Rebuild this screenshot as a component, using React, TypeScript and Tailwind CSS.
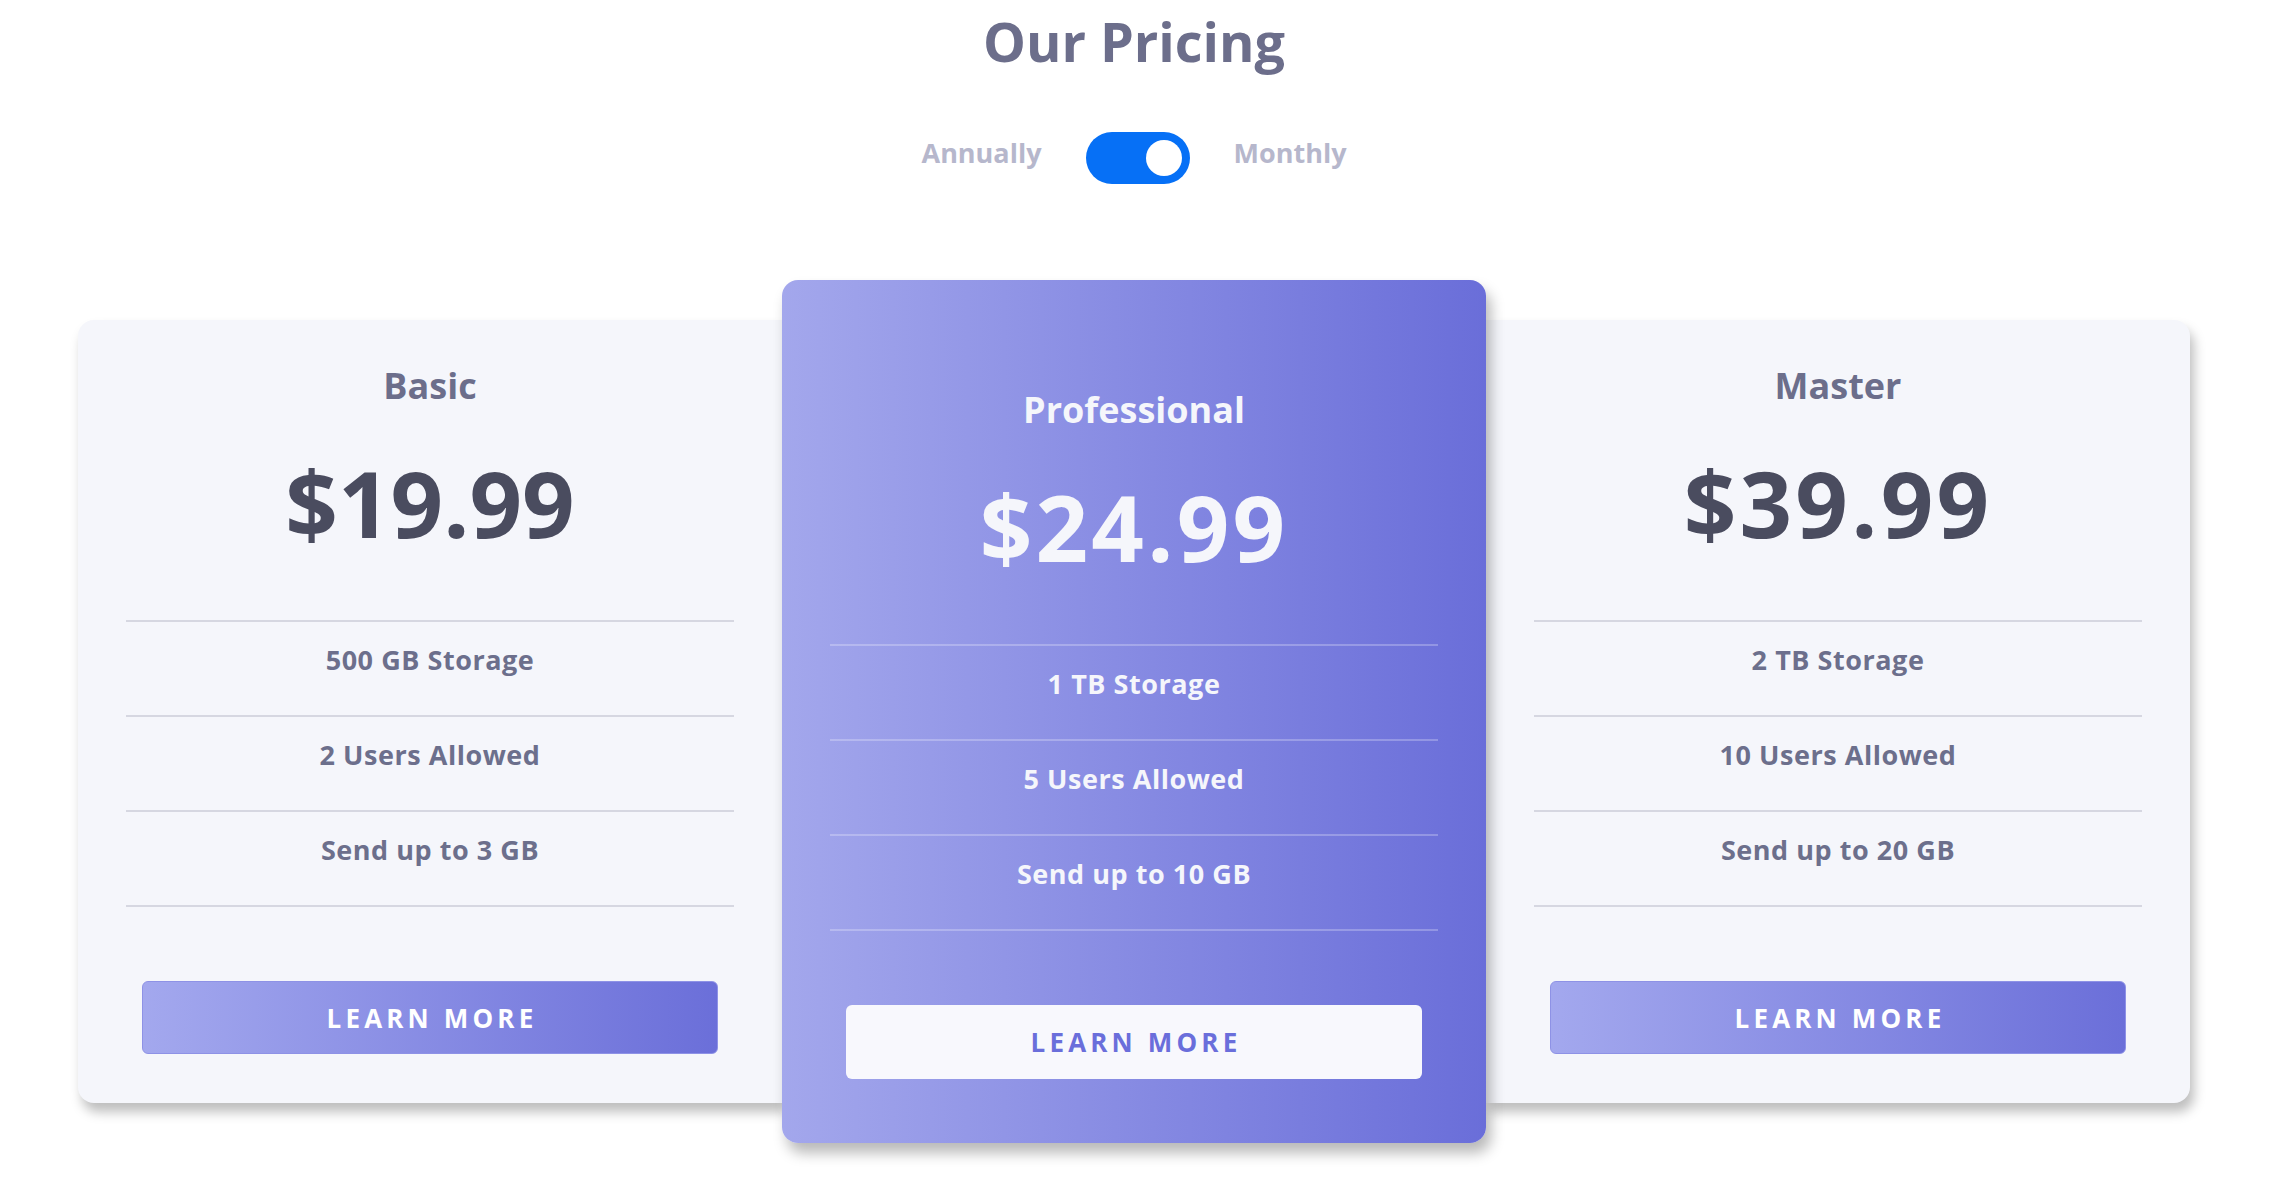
import React from "react";

type Plan = {
  name: string;
  price: string;
  wide: boolean;
  features: string[];
};

const basic: Plan = {
  name: "Basic",
  price: "$19.99",
  wide: false,
  features: ["500 GB Storage", "2 Users Allowed", "Send up to 3 GB"],
};
const pro: Plan = {
  name: "Professional",
  price: "$24.99",
  wide: true,
  features: ["1 TB Storage", "5 Users Allowed", "Send up to 10 GB"],
};
const master: Plan = {
  name: "Master",
  price: "$39.99",
  wide: true,
  features: ["2 TB Storage", "10 Users Allowed", "Send up to 20 GB"],
};

function SideCard({ plan, side }: { plan: Plan; side: "left" | "right" }) {
  return (
    <div
      className={
        side === "left"
          ? "w-[704px] shrink-0 rounded-l-2xl bg-[#f5f6fb] px-12 pt-12 pb-[49px] shadow-[4px_9px_12px_rgba(0,0,0,0.26)]"
          : "w-[704px] shrink-0 rounded-r-2xl bg-[#f5f6fb] px-12 pt-12 pb-[49px] shadow-[4px_9px_12px_rgba(0,0,0,0.26)]"
      }
    >
      <h2 className="text-center text-[36px] leading-none font-bold text-[#6c6e8b]">{plan.name}</h2>
      <div
        className={
          plan.wide
            ? "mt-[53px] text-center text-[92px] leading-none font-bold tracking-[0.035em] text-[#4a4c5f]"
            : "mt-[53px] text-center text-[92px] leading-none font-bold text-[#4a4c5f]"
        }
      >
        {plan.price}
      </div>
      <ul className="mt-[71px] border-t-2 border-[#d6d7e1]">
        {plan.features.map((f) => (
          <li
            key={f}
            className="h-[95px] border-b-2 border-[#d6d7e1] pt-[24px] text-center text-[27px] leading-none font-bold tracking-[0.02em] text-[#6c6f8c]"
          >
            {f}
          </li>
        ))}
      </ul>
      <button className="mx-4 mt-[74px] flex h-[73px] w-[calc(100%-32px)] items-center justify-center rounded-md border border-[#8e92e6] bg-[linear-gradient(to_right,#a3a8ee,#6b6fd9)] pl-[4px] text-[26px] leading-none font-bold tracking-[0.16em] text-white">
        LEARN MORE
      </button>
    </div>
  );
}

function ProCard({ plan }: { plan: Plan }) {
  return (
    <div className="relative z-10 w-[704px] shrink-0 rounded-2xl bg-[linear-gradient(to_right,#a3a7ec,#6a6ed9)] px-12 pt-[112px] pb-[64px] shadow-[5px_10px_14px_rgba(0,0,0,0.28)]">
      <h2 className="text-center text-[36px] leading-none font-bold text-[#f5f6fb]">{plan.name}</h2>
      <div className="mt-[53px] text-center text-[92px] leading-none font-bold tracking-[0.035em] text-[#f5f6fb]">
        {plan.price}
      </div>
      <ul className="mt-[71px] border-t-2 border-white/25">
        {plan.features.map((f) => (
          <li
            key={f}
            className="h-[95px] border-b-2 border-white/25 pt-[24px] text-center text-[27px] leading-none font-bold tracking-[0.02em] text-[#f5f6fb]"
          >
            {f}
          </li>
        ))}
      </ul>
      <button className="mx-4 mt-[74px] flex h-[74px] w-[calc(100%-32px)] items-center justify-center rounded-md bg-[#f8f8fd] pl-[4px] text-[26px] leading-none font-bold tracking-[0.16em] text-[#6a6edb]">
        LEARN MORE
      </button>
    </div>
  );
}

export default function App() {
  return (
    <div className="min-h-screen w-full bg-white pr-2 font-['Open_Sans','Liberation_Sans',sans-serif]">
      <div className="flex flex-col items-center">
        <h1 className="mt-[14px] text-[54px] leading-none font-bold text-[#6c6e8b]">Our Pricing</h1>
        <div className="mt-[64px] flex items-center gap-11">
          <span className="pb-3 text-[27px] leading-none font-bold text-[#b6b7cc]">Annually</span>
          <div className="flex h-[52px] w-[104px] items-center justify-end rounded-full bg-[#0670f6] pr-2">
            <div className="h-9 w-9 rounded-full bg-white" />
          </div>
          <span className="pb-3 text-[27px] leading-none font-bold text-[#b6b7cc]">Monthly</span>
        </div>
        <div className="mt-[96px] flex items-center">
          <SideCard plan={basic} side="left" />
          <ProCard plan={pro} />
          <SideCard plan={master} side="right" />
        </div>
      </div>
    </div>
  );
}
